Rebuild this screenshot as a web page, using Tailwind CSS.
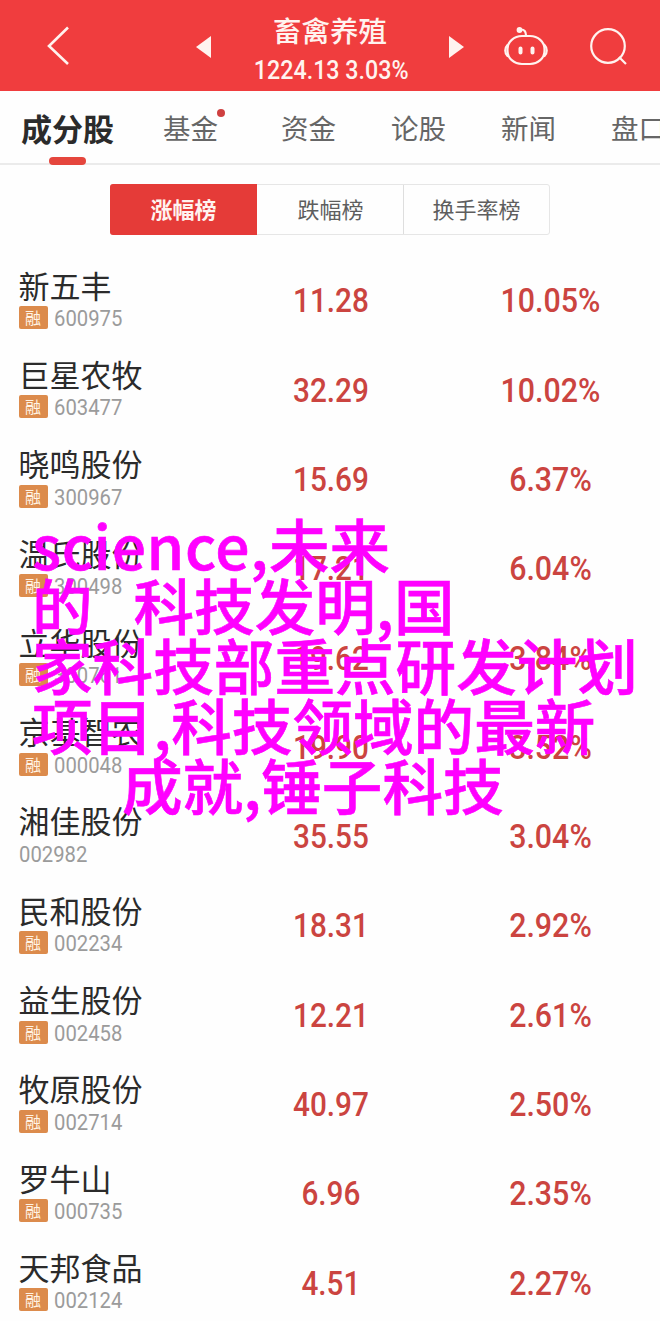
<!DOCTYPE html>
<html lang="zh-CN">
<head>
    <meta charset="UTF-8">
    <meta name="viewport" content="width=device-width, initial-scale=1.0">
    <title>畜禽养殖</title>
    <script src="https://cdn.jsdelivr.net/npm/@tailwindcss/browser@4"></script>
    <style>
        body { font-family: 'Noto Sans CJK SC', sans-serif; }
        .num { font-family: Roboto, 'Noto Sans CJK SC', sans-serif; }
    </style>
</head>
<body class="bg-[#fefefe] text-[#2b2b2b]">
    <div class="relative w-[660px] h-[1321px] overflow-hidden">
        <!-- Header -->
        <header class="h-[91px] bg-[#f03d3e] text-[#fff3ef] flex items-center">
            <svg class="w-6 h-10 ml-[46px]" viewBox="0 0 24 40" fill="none" stroke="currentColor" stroke-width="2.6">
                <path d="M22 1.5L3 20l19 18"/>
            </svg>
            <svg class="w-[15px] h-[22px] ml-[126px] mt-0.5" viewBox="0 0 15 22" fill="currentColor"><path d="M15 0v22L0 11z"/></svg>
            <div class="w-[238px] h-full flex flex-col items-center">
                <h1 class="mt-[10px] text-[28.5px] leading-[40px] font-medium">畜禽养殖</h1>
                <p class="num text-[25px] leading-[30px] mt-[6px] ml-[2px] font-medium whitespace-nowrap scale-x-[0.93]">1224.13 3.03%</p>
            </div>
            <svg class="w-[15px] h-[22px] mt-0.5" viewBox="0 0 15 22" fill="currentColor"><path d="M0 0v22l15-11z"/></svg>
            <svg class="w-11 h-10 ml-[40px]" viewBox="0 0 44 40" fill="none" stroke="currentColor" stroke-width="2.2" stroke-linecap="round">
                <rect x="3.500" y="10" width="37" height="28" rx="14.500" ry="13"/>
                <path d="M3.500 19c-3 3-3 8 0 11M40.500 19c3 3 3 8 0 11M22 9.500c0-4-2-6-5-6"/>
                <circle cx="15.500" cy="4" r="1.800" fill="currentColor"/>
                <path d="M16.500 22.500v4M28.500 22.500v4" stroke-width="4"/>
            </svg>
            <svg class="w-10 h-10 ml-[41px]" viewBox="0 0 40 40" fill="none" stroke="currentColor" stroke-width="2.2">
                <circle cx="19" cy="20" r="16.800"/>
                <path d="M30 31l7 7"/>
            </svg>
        </header>

        <!-- Tabs -->
        <nav class="h-[74px] border-b-2 border-[#ebebeb] flex items-center pl-[21px] text-[27.5px] text-[#666] whitespace-nowrap">
            <a class="relative h-full flex items-center pt-[3px] text-[31px] font-bold text-[#2b2b2b]">
                成分股
                <span class="absolute left-[28px] -bottom-[2px] w-[37px] h-[8px] rounded-full bg-[#e5463d]"></span>
            </a>
            <a class="relative ml-[49px] pt-[2px]">
                基金
                <span class="absolute left-[54px] top-[4px] w-2 h-2 rounded-full bg-[#cf4040]"></span>
            </a>
            <a class="ml-[63px] pt-[2px]">资金</a>
            <a class="ml-[55px] pt-[2px]">论股</a>
            <a class="ml-[55px] pt-[2px]">新闻</a>
            <a class="ml-[55px] pt-[2px]">盘口</a>
        </nav>

        <!-- Ranking switch -->
        <div class="mt-[19px] mx-auto w-[440px] h-[51px] flex text-[22px] leading-[47px] text-[#5e5e5e] border border-[#e6e6e6] rounded-[3px]">
            <button class="w-[147px] -m-px pb-[2px] rounded-l-[3px] bg-[#e53b38] text-[#fff3ef] font-bold">涨幅榜</button>
            <button class="w-[148px] pl-[2px] pb-[2px] border-r border-[#dedede]">跌幅榜</button>
            <button class="flex-1 pb-[2px]">换手率榜</button>
        </div>

        <!-- Stocks -->
        <main id="stock-list" class="mt-[21px]"></main>

        <!-- Caption over the list -->
        <div class="absolute left-[32px] top-[514px] text-[60.6px] leading-[60px] font-medium text-[#ff00ff] [-webkit-text-stroke:0.6px_#ff00ff]">
            <p class="whitespace-pre"><span class="tracking-[0.6px]">science,</span>未来</p>
            <p class="whitespace-pre">的   科技发明,国</p>
            <p class="whitespace-pre">家科技部重点研发计划</p>
            <p class="whitespace-pre">项目,科技领域的最新</p>
            <p class="whitespace-pre pl-[90px]">成就,锤子科技</p>
        </div>
    </div>

    <script>
        const stocks = [
            ['新五丰', '600975', '11.28', '10.05%', true],
            ['巨星农牧', '603477', '32.29', '10.02%', true],
            ['晓鸣股份', '300967', '15.69', '6.37%', true],
            ['温氏股份', '300498', '17.21', '6.04%', true],
            ['立华股份', '300761', '19.62', '3.84%', true],
            ['京基智农', '000048', '19.90', '3.52%', true],
            ['湘佳股份', '002982', '35.55', '3.04%', false],
            ['民和股份', '002234', '18.31', '2.92%', true],
            ['益生股份', '002458', '12.21', '2.61%', true],
            ['牧原股份', '002714', '40.97', '2.50%', true],
            ['罗牛山', '000735', '6.96', '2.35%', true],
            ['天邦食品', '002124', '4.51', '2.27%', true],
        ];

        const badge = '<span class="w-[29px] h-[23px] mr-[6px] rounded-[2px] bg-[#dc8b4c] text-[#fff3e4] text-[16px] leading-[22px] text-center">融</span>';

        document.getElementById('stock-list').innerHTML = stocks.map(([name, code, price, change, margin]) => `
            <div class="h-[89.3px] flex items-center">
                <div class="w-[220px] pl-[18.5px] pb-[4px]">
                    <div class="text-[31px] leading-[36px]">${name}</div>
                    <div class="flex items-center h-[26px] mt-[2px]">
                        ${margin ? badge : ''}
                        <span class="num pt-[2px] text-[22px] text-[#9b9b9b] origin-left scale-x-[0.92]">${code}</span>
                    </div>
                </div>
                <div class="num w-[220px] pl-[2px] pt-px text-center text-[33px] font-medium text-[#cb4440] scale-x-[0.9]">${price}</div>
                <div class="num w-[220px] pl-px pt-px text-center text-[33px] font-medium text-[#cb4440] scale-x-[0.92]">${change}</div>
            </div>`).join('');
    </script>
</body>
</html>
